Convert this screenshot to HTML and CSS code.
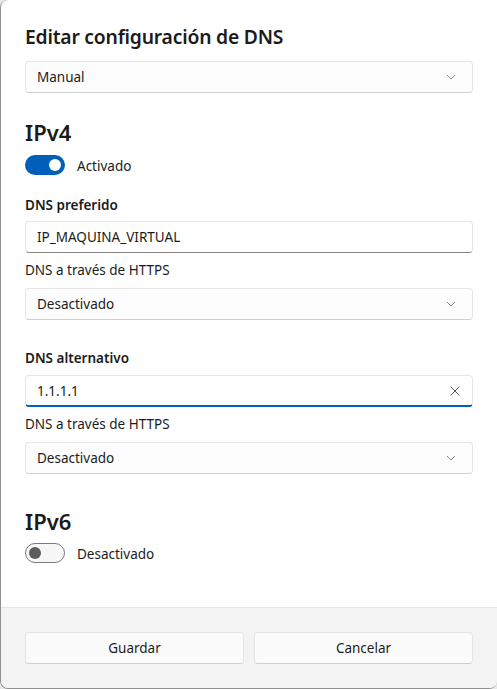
FILE: index.html
```html
<!DOCTYPE html>
<html lang="es">
<head>
<meta charset="utf-8">
<title>Editar configuración de DNS</title>
<link rel="stylesheet" href="styles.css">
</head>
<body>
<div class="dialog">
  <div class="content">
    <h1 class="title">Editar configuración de DNS</h1>
    <div class="select first">
      <span>Manual</span>
      <svg class="chev" width="10" height="6" viewBox="0 0 10 6"><path d="M1 1 L5 5 L9 1" fill="none" stroke="#8a8a8a" stroke-width="1"/></svg>
    </div>

    <h2 class="section">IPv4</h2>
    <div class="toggle-row">
      <span class="switch on"><span class="knob"></span></span>
      <span class="toggle-label">Activado</span>
    </div>

    <div class="label bold gap-first">DNS preferido</div>
    <div class="input first-input"><span>IP_MAQUINA_VIRTUAL</span></div>
    <div class="label">DNS a través de HTTPS</div>
    <div class="select">
      <span>Desactivado</span>
      <svg class="chev" width="10" height="6" viewBox="0 0 10 6"><path d="M1 1 L5 5 L9 1" fill="none" stroke="#8a8a8a" stroke-width="1"/></svg>
    </div>

    <div class="label bold gap-group">DNS alternativo</div>
    <div class="input focused">
      <span>1.1.1.1</span>
      <svg class="clear" width="10" height="10" viewBox="0 0 10 10"><path d="M0.5 0.5 L9.5 9.5 M9.5 0.5 L0.5 9.5" fill="none" stroke="#5a5a5a" stroke-width="1"/></svg>
    </div>
    <div class="label">DNS a través de HTTPS</div>
    <div class="select">
      <span>Desactivado</span>
      <svg class="chev" width="10" height="6" viewBox="0 0 10 6"><path d="M1 1 L5 5 L9 1" fill="none" stroke="#8a8a8a" stroke-width="1"/></svg>
    </div>

    <h2 class="section v6">IPv6</h2>
    <div class="toggle-row">
      <span class="switch off"><span class="knob"></span></span>
      <span class="toggle-label">Desactivado</span>
    </div>
  </div>
  <div class="footer">
    <button class="btn">Guardar</button>
    <button class="btn">Cancelar</button>
  </div>
</div>
</body>
</html>
```
FILE: styles.css
```css
* { box-sizing: border-box; }
html, body { margin: 0; padding: 0; }
body {
  background: #e8e8e8;
  font-family: "Noto Sans", "Open Sans", sans-serif;
  color: #1b1b1b;
  width: 497px;
  height: 689px;
  overflow: hidden;
}
.dialog {
  width: 497px;
  height: 689px;
  background: #ffffff;
  border-left: 1px solid #8f8f8f;
  border-bottom: 1px solid #8f8f8f;
  border-radius: 8px 0 8px 8px;
  display: flex;
  flex-direction: column;
  overflow: hidden;
}
.content {
  flex: 1;
  padding: 23px 24px 0 24px;
  display: flex;
  flex-direction: column;
}
.title {
  margin: 0;
  font-size: 19.3px;
  font-weight: 600;
  line-height: 28px;
  letter-spacing: -0.2px;
}
.select, .input {
  height: 32px;
  border: 1px solid #e6e6e6;
  border-bottom-color: #d0d0d0;
  border-radius: 4px;
  background: #fdfdfd;
  display: flex;
  align-items: center;
  justify-content: space-between;
  padding: 0 16px 0 11px;
  font-size: 13.5px;
  flex-shrink: 0;
}
.select.first { margin-top: 10px; }
.input {
  margin-top: 7px;
  border-bottom-color: #888888;
  background: #ffffff;
  padding-right: 12px;
}
.input.first-input { margin-top: 6px; }
.input.focused {
  border-bottom: 2px solid #005fb8;
}
.section {
  margin: 25px 0 0 0;
  font-size: 22px;
  font-weight: 600;
  line-height: 28px;
}
.section.v6 { margin-top: 33px; }
.toggle-row {
  margin-top: 9px;
  height: 20px;
  display: flex;
  align-items: center;
}
.section.v6 + .toggle-row { margin-top: 8px; }
.switch {
  width: 40px;
  height: 20px;
  border-radius: 10px;
  position: relative;
  flex-shrink: 0;
}
.switch.on { background: #005fb8; }
.switch.off { background: #f7f7f7; border: 1px solid #7a7a7a; }
.knob {
  position: absolute;
  width: 12px;
  height: 12px;
  border-radius: 50%;
  top: 4px;
}
.switch.on .knob { background: #ffffff; right: 4px; }
.switch.off .knob { background: #5c5c5c; left: 3px; top: 3px; }
.toggle-label {
  margin-left: 12px;
  font-size: 13.5px;
  padding-top: 1px;
}
.label {
  margin-top: 7px;
  font-size: 13.5px;
  line-height: 20px;
}
.label + .select { margin-top: 8px; }
.label.bold { font-weight: 600; }
.gap-first { margin-top: 20px; }
.gap-group { margin-top: 28px; }
.footer {
  height: 81px;
  background: #f3f3f3;
  border-top: 1px solid #e5e5e5;
  padding: 24px 24px 0 24px;
  display: flex;
  gap: 10px;
  align-items: flex-start;
}
.btn {
  flex: 1;
  height: 32px;
  background: #fbfbfb;
  border: 1px solid #e5e5e5;
  border-bottom-color: #cfcfcf;
  border-radius: 4px;
  font-family: inherit;
  font-size: 13.5px;
  color: #1b1b1b;
  padding: 0;
}
```
